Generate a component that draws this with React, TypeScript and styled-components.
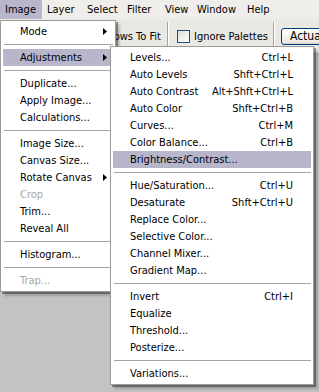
import React from "react";
import styled, { createGlobalStyle } from "styled-components";

const GlobalStyle = createGlobalStyle`
  html, body {
    margin: 0;
    padding: 0;
    background: #c3c3c3;
  }
  body {
    font-family: "DejaVu Sans Condensed", "Liberation Sans", sans-serif;
    font-size: 11px;
    color: #000000;
  }
`;

const Screen = styled.div`
  position: relative;
  width: 319px;
  height: 392px;
  overflow: hidden;
  display: flex;
  flex-direction: column;
  background: #c3c3c3;
`;

const MenuBar = styled.div`
  height: 19px;
  display: flex;
  background: #efeeea;
`;

const BarItem = styled.div<{ $width: number; $active?: boolean }>`
  width: ${(p) => p.$width}px;
  padding-left: 5px;
  box-sizing: border-box;
  line-height: 19px;
  white-space: nowrap;
  background: ${(p) => (p.$active ? "#b7b6cb" : "transparent")};
`;

const Toolbar = styled.div`
  height: 34px;
  display: flex;
  align-items: center;
  background: #e9e8e3;
  border-bottom: 1px solid #a9a9a9;
`;

const ToolGroup = styled.div<{ $width?: number }>`
  ${(p) => (p.$width ? `width: ${p.$width}px;` : "")}
  flex-shrink: 0;
  display: flex;
  align-items: center;
  justify-content: flex-end;
  gap: 4px;
  white-space: nowrap;
`;

const ToolSep = styled.div<{ $left: number; $right: number }>`
  align-self: stretch;
  margin: 3px ${(p) => p.$right}px 0 ${(p) => p.$left}px;
  width: 1px;
  background: #a4a39d;
  box-shadow: 1px 0 0 #ffffff;
  flex-shrink: 0;
`;

const Check = styled.span`
  width: 11px;
  height: 11px;
  border: 1px solid #1c5180;
  background: linear-gradient(135deg, #dcdcd6, #ffffff);
  flex-shrink: 0;
`;

const ToolButton = styled.div`
  height: 15px;
  padding: 0 8px;
  display: flex;
  align-items: center;
  border: 1px solid #003c74;
  border-radius: 3px;
  background: linear-gradient(#ffffff, #ecebe6 85%, #d6d0c5);
  white-space: nowrap;
  flex-shrink: 0;
  font-size: 12px;
`;

const Workspace = styled.div`
  flex: 1;
  background: #c3c3c3;
`;

const Menu = styled.div<{ $left: number; $top: number; $width: number }>`
  position: absolute;
  left: ${(p) => p.$left}px;
  top: ${(p) => p.$top}px;
  width: ${(p) => p.$width}px;
  box-sizing: border-box;
  padding: 2px;
  background: #ffffff;
  border: 1px solid #9b9b9b;
  box-shadow: 2px 2px 0 rgba(0, 0, 0, 0.35), 4px 4px 2px rgba(0, 0, 0, 0.18);
`;

const Item = styled.div<{ $pad: number; $active?: boolean; $disabled?: boolean }>`
  height: 17px;
  display: flex;
  align-items: center;
  justify-content: space-between;
  padding: 0 ${(p) => p.$pad}px 0 17px;
  white-space: nowrap;
  background: ${(p) => (p.$active ? "#b7b6cb" : "transparent")};
  color: ${(p) => (p.$disabled ? "#a8a7a2" : "#000000")};
`;

const Shortcut = styled.span`
  margin-left: 12px;
`;

const Arrow = styled.svg`
  width: 4px;
  height: 7px;
  flex-shrink: 0;
`;

const Separator = styled.div`
  height: 1px;
  margin: 4px 0 4px 1px;
  background: #a5a5a5;
`;

type Entry =
  | { label: string; key?: string; sub?: boolean; active?: boolean; disabled?: boolean }
  | "sep";

const imageMenu: Entry[] = [
  { label: "Mode", sub: true },
  "sep",
  { label: "Adjustments", sub: true, active: true },
  "sep",
  { label: "Duplicate..." },
  { label: "Apply Image..." },
  { label: "Calculations..." },
  "sep",
  { label: "Image Size..." },
  { label: "Canvas Size..." },
  { label: "Rotate Canvas", sub: true },
  { label: "Crop", disabled: true },
  { label: "Trim..." },
  { label: "Reveal All" },
  "sep",
  { label: "Histogram..." },
  "sep",
  { label: "Trap...", disabled: true },
];

const adjustMenu: Entry[] = [
  { label: "Levels...", key: "Ctrl+L" },
  { label: "Auto Levels", key: "Shft+Ctrl+L" },
  { label: "Auto Contrast", key: "Alt+Shft+Ctrl+L" },
  { label: "Auto Color", key: "Shft+Ctrl+B" },
  { label: "Curves...", key: "Ctrl+M" },
  { label: "Color Balance...", key: "Ctrl+B" },
  { label: "Brightness/Contrast...", active: true },
  "sep",
  { label: "Hue/Saturation...", key: "Ctrl+U" },
  { label: "Desaturate", key: "Shft+Ctrl+U" },
  { label: "Replace Color..." },
  { label: "Selective Color..." },
  { label: "Channel Mixer..." },
  { label: "Gradient Map..." },
  "sep",
  { label: "Invert", key: "Ctrl+I" },
  { label: "Equalize" },
  { label: "Threshold..." },
  { label: "Posterize..." },
  "sep",
  { label: "Variations..." },
];

const menuBar: [string, number][] = [
  ["Image", 42],
  ["Layer", 40],
  ["Select", 40],
  ["Filter", 38],
  ["View", 32],
  ["Window", 50],
  ["Help", 40],
];

const MenuList = ({ entries, pad }: { entries: Entry[]; pad: number }) => (
  <>
    {entries.map((e, i) =>
      e === "sep" ? (
        <Separator key={i} />
      ) : (
        <Item key={i} $pad={pad} $active={e.active} $disabled={e.disabled}>
          <span>{e.label}</span>
          {e.key && <Shortcut>{e.key}</Shortcut>}
          {e.sub && (
            <Arrow viewBox="0 0 4 7">
              <polygon points="0,0 4,3.5 0,7" fill="#000" />
            </Arrow>
          )}
        </Item>
      )
    )}
  </>
);

export default function App() {
  return (
    <Screen>
      <GlobalStyle />
      <MenuBar>
        {menuBar.map(([name, w], i) => (
          <BarItem key={name} $width={w} $active={i === 0}>
            {name}
          </BarItem>
        ))}
      </MenuBar>
      <Toolbar>
        <ToolGroup $width={161}>
          <Check />
          <span>Resize Windows To Fit</span>
        </ToolGroup>
        <ToolSep $left={6} $right={9} />
        <ToolGroup>
          <Check />
          <span>Ignore Palettes</span>
        </ToolGroup>
        <ToolSep $left={5} $right={7} />
        <ToolButton>Actual Pixels</ToolButton>
      </Toolbar>
      <Workspace />

      <Menu $left={0} $top={20} $width={116}>
        <MenuList entries={imageMenu} pad={6} />
      </Menu>
      <Menu $left={110} $top={46} $width={204}>
        <MenuList entries={adjustMenu} pad={18} />
      </Menu>
    </Screen>
  );
}
